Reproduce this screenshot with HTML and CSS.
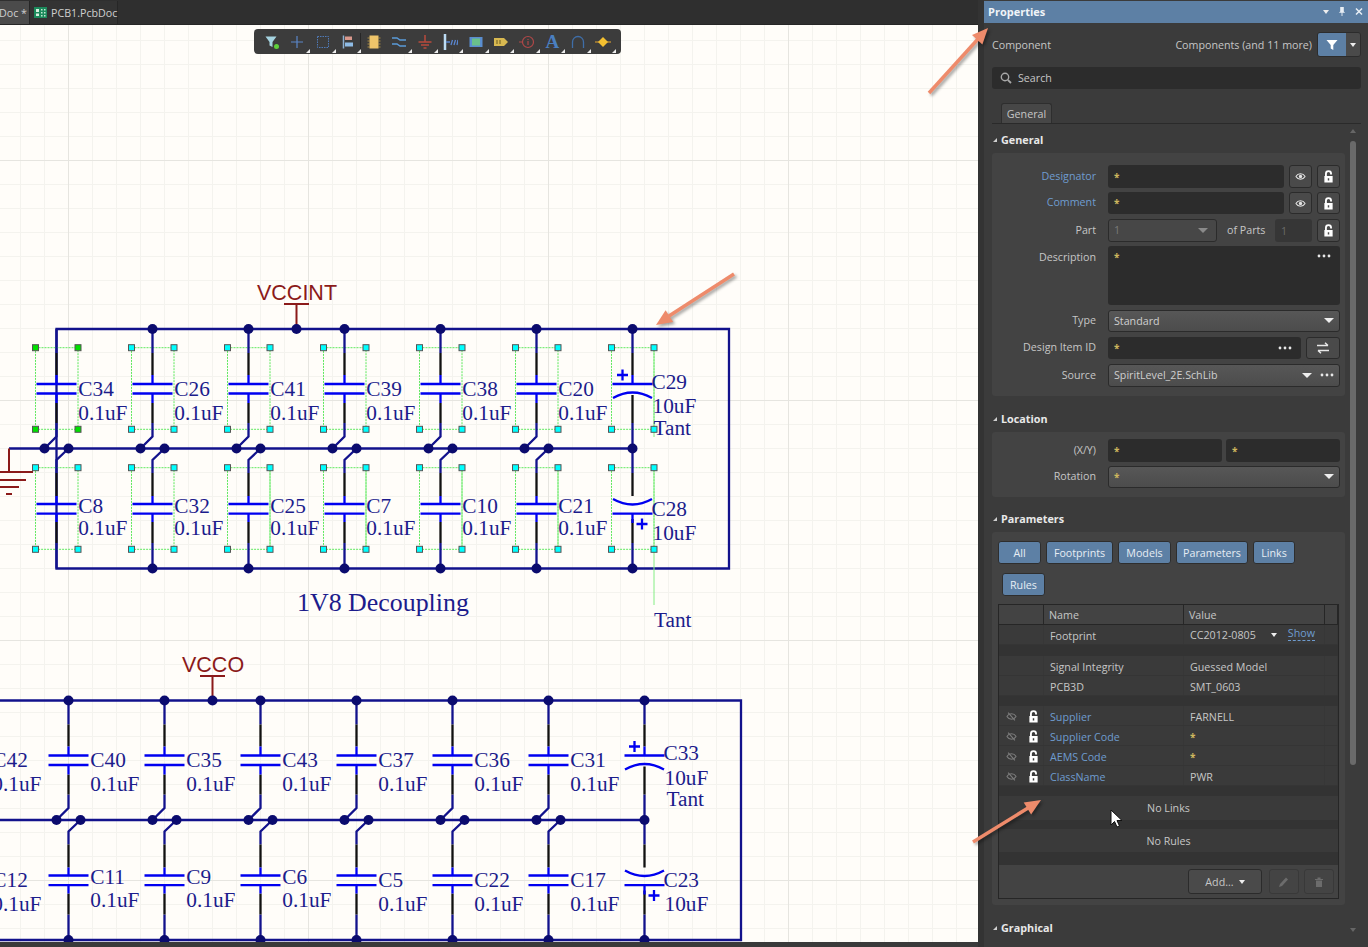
FILE: index.html
```html
<!DOCTYPE html>
<html lang="en">
<head>
  <meta charset="UTF-8" />
  <title>Properties - PCB1.PcbDoc</title>
  <link rel="stylesheet" href="styles.css">
</head>
<body>
  <svg class="icon-defs" aria-hidden="true">
    <defs>
      <symbol id="i-lock" viewBox="0 0 12 14">
        <path d="M3.200 7V4a2.800 2.800 0 0 1 5.600 0v.8" fill="none" stroke="#fff" stroke-width="2"/>
        <path d="M1.500 6.500h9v7h-9z M5.200 9v2.400h1.600V9z" fill="#fff" fill-rule="evenodd"/>
      </symbol>
      <symbol id="i-eye" viewBox="0 0 14 12">
        <path d="M.8 6C3.800 1.200 10.200 1.200 13.200 6 10.200 10.800 3.800 10.800.8 6z" fill="none" stroke="#e4e4e4" stroke-width="1.500"/>
        <circle cx="7" cy="6" r="2.200" fill="#e4e4e4"/>
      </symbol>
      <symbol id="i-eye-off" viewBox="0 0 14 12">
        <path d="M.8 6C3.800 1.200 10.200 1.200 13.200 6 10.200 10.800 3.800 10.800.8 6z" fill="none" stroke="#7c7c7c" stroke-width="1.500"/>
        <path d="M2.500.8l9 10.400" stroke="#7c7c7c" stroke-width="1.500"/>
      </symbol>
      <symbol id="i-dots" viewBox="0 0 14 4">
        <circle cx="2" cy="2" r="1.400" fill="#e8e8e8"/><circle cx="7" cy="2" r="1.400" fill="#e8e8e8"/><circle cx="12" cy="2" r="1.400" fill="#e8e8e8"/>
      </symbol>

      <!-- schematic parts, origin = top rail at the capacitor's column -->
      <g id="cap-top" fill="none" stroke-width="2.300">
        <path d="M0 0V24M0 94V107.500L-12 119.500" stroke="#12128c"/>
        <path d="M0 24V46M0 74V94" stroke="#111"/>
        <path d="M0 46V55M0 64.500V74M-20 55H20M-20 64.500H20" stroke="#0000f0"/>
      </g>
      <g id="cap-bot" fill="none" stroke-width="2.300">
        <path d="M12 119.500L0 131V144M0 214V239.500" stroke="#12128c"/>
        <path d="M0 144V167M0 193V214" stroke="#111"/>
        <path d="M0 167V175M0 184.700V193M-20 175H20M-20 184.700H20" stroke="#0000f0"/>
      </g>
      <g id="pol-top" fill="none" stroke-width="2.300">
        <path d="M0 0V24M0 94V119.500" stroke="#12128c"/>
        <path d="M0 24V46M0 66V94" stroke="#111"/>
        <path d="M0 46V55M-20 55H20M-19.500 69Q0 58 19.500 69M-15.500 46H-4.500M-10 40.500V51.500" stroke="#0000f0"/>
      </g>
      <g id="pol-bot" fill="none" stroke-width="2.300">
        <path d="M0 119.500V144M0 214V239.500" stroke="#12128c"/>
        <path d="M0 144V167M0 190V214" stroke="#111"/>
        <path d="M-19.500 170Q0 181 19.500 170M-20 184.700H20M0 184.700V194M4 195H15M9.500 189.500V200.500" stroke="#0000f0"/>
      </g>
      <g id="dots-mid" fill="#0b0b6e"><circle cx="-12" cy="119.500" r="5"/><circle cx="12" cy="119.500" r="5"/></g>
      <path id="sel-top" d="M-21 18.700H21.500V100.300H-21Z" fill="none" stroke="#5fe85f" stroke-dasharray="2 1"/>
      <path id="sel-bot" d="M-21 138.700H21.500V220.300H-21Z" fill="none" stroke="#5fe85f" stroke-dasharray="2 1"/>
      <g id="grips-top" stroke="#555"><rect x="-24" y="15.700" width="6" height="6"/><rect x="18.500" y="15.700" width="6" height="6"/><rect x="-24" y="97.300" width="6" height="6"/><rect x="18.500" y="97.300" width="6" height="6"/></g>
      <g id="grips-bot" stroke="#555"><rect x="-24" y="135.700" width="6" height="6"/><rect x="18.500" y="135.700" width="6" height="6"/><rect x="-24" y="217.300" width="6" height="6"/><rect x="18.500" y="217.300" width="6" height="6"/></g>
    </defs>
  </svg>

  <div class="app">
    <main class="editor">
      <nav class="doc-tabs">
        <div class="doc-tab doc-tab-active">Doc *</div>
        <div class="doc-tab">
          <svg class="pcb-icon" viewBox="0 0 13 11"><rect width="13" height="11" fill="#1c8a5c"/><path d="M2 2h3v3H2zM2 6.500h3v2.500H2z" fill="#d8f0e0"/><path d="M7 2h1.500v1.500H7zM10 2h1.500v1.500H10zM7 5h1.500v1.500H7zM10 5h1.500v1.500H10zM7 8h1.500v1.500H7zM10 8h1.500v1.500H10z" fill="#bfe8d0"/></svg>
          PCB1.PcbDoc
        </div>
      </nav>

      <div class="canvas">
        <svg class="schematic" viewBox="0 25 978 917" width="978" height="917">
          <!-- 1V8 block -->
          <path class="wire" d="M56.500 329H729V568.500H56.500ZM9 448.500H632.500"/>
          <path class="power" d="M296.500 304V329M284 304H309M9 448.500V472M0 472H33M0 480H26M0 487H19M6 494H12"/>
          <text class="net" x="257" y="300">VCCINT</text>
          <g class="sel">
            <use href="#sel-top" x="56.500" y="329"/><use href="#sel-top" x="152.500" y="329"/><use href="#sel-top" x="248.500" y="329"/><use href="#sel-top" x="344.500" y="329"/><use href="#sel-top" x="440.500" y="329"/><use href="#sel-top" x="536.500" y="329"/><use href="#sel-top" x="632.500" y="329"/>
            <use href="#sel-bot" x="56.500" y="329"/><use href="#sel-bot" x="152.500" y="329"/><use href="#sel-bot" x="248.500" y="329"/><use href="#sel-bot" x="344.500" y="329"/><use href="#sel-bot" x="440.500" y="329"/><use href="#sel-bot" x="536.500" y="329"/><use href="#sel-bot" x="632.500" y="329"/>
          </g>
          <path class="sel-line" d="M654 347V437M654 467V605M270 468V549M366 468V549M462 468V549M558 468V549"/>
          <use href="#cap-top" x="56.500" y="329"/><use href="#cap-top" x="152.500" y="329"/><use href="#cap-top" x="248.500" y="329"/><use href="#cap-top" x="344.500" y="329"/><use href="#cap-top" x="440.500" y="329"/><use href="#cap-top" x="536.500" y="329"/><use href="#pol-top" x="632.500" y="329"/>
          <use href="#cap-bot" x="56.500" y="329"/><use href="#cap-bot" x="152.500" y="329"/><use href="#cap-bot" x="248.500" y="329"/><use href="#cap-bot" x="344.500" y="329"/><use href="#cap-bot" x="440.500" y="329"/><use href="#cap-bot" x="536.500" y="329"/><use href="#pol-bot" x="632.500" y="329"/>
          <use href="#dots-mid" x="56.500" y="329"/><use href="#dots-mid" x="152.500" y="329"/><use href="#dots-mid" x="248.500" y="329"/><use href="#dots-mid" x="344.500" y="329"/><use href="#dots-mid" x="440.500" y="329"/><use href="#dots-mid" x="536.500" y="329"/>
          <g class="dots">
            <circle cx="152.500" cy="329" r="5"/><circle cx="248.500" cy="329" r="5"/><circle cx="296.500" cy="329" r="5"/><circle cx="344.500" cy="329" r="5"/><circle cx="440.500" cy="329" r="5"/><circle cx="536.500" cy="329" r="5"/><circle cx="632.500" cy="329" r="5"/>
            <circle cx="632.500" cy="448.500" r="5"/>
            <circle cx="152.500" cy="568.500" r="5"/><circle cx="248.500" cy="568.500" r="5"/><circle cx="344.500" cy="568.500" r="5"/><circle cx="440.500" cy="568.500" r="5"/><circle cx="536.500" cy="568.500" r="5"/><circle cx="632.500" cy="568.500" r="5"/>
          </g>
          <use class="grip-on" href="#grips-top" x="56.500" y="329"/><use class="grip" href="#grips-bot" x="56.500" y="329"/>
          <use class="grip" href="#grips-top" x="152.500" y="329"/><use class="grip" href="#grips-bot" x="152.500" y="329"/>
          <use class="grip" href="#grips-top" x="248.500" y="329"/><use class="grip" href="#grips-bot" x="248.500" y="329"/>
          <use class="grip" href="#grips-top" x="344.500" y="329"/><use class="grip" href="#grips-bot" x="344.500" y="329"/>
          <use class="grip" href="#grips-top" x="440.500" y="329"/><use class="grip" href="#grips-bot" x="440.500" y="329"/>
          <use class="grip" href="#grips-top" x="536.500" y="329"/><use class="grip" href="#grips-bot" x="536.500" y="329"/>
          <use class="grip" href="#grips-top" x="632.500" y="329"/><use class="grip" href="#grips-bot" x="632.500" y="329"/>
          <g class="label">
            <text x="78.300" y="396">C34</text><text x="78.300" y="420">0.1uF</text>
            <text x="174.300" y="396">C26</text><text x="174.300" y="420">0.1uF</text>
            <text x="270.300" y="396">C41</text><text x="270.300" y="420">0.1uF</text>
            <text x="366.300" y="396">C39</text><text x="366.300" y="420">0.1uF</text>
            <text x="462.300" y="396">C38</text><text x="462.300" y="420">0.1uF</text>
            <text x="558.300" y="396">C20</text><text x="558.300" y="420">0.1uF</text>
            <text x="651.500" y="389">C29</text><text x="652.500" y="413">10uF</text><text x="653.500" y="435">Tant</text>
            <text x="78.300" y="513">C8</text><text x="78.300" y="535">0.1uF</text>
            <text x="174.300" y="513">C32</text><text x="174.300" y="535">0.1uF</text>
            <text x="270.300" y="513">C25</text><text x="270.300" y="535">0.1uF</text>
            <text x="366.300" y="513">C7</text><text x="366.300" y="535">0.1uF</text>
            <text x="462.300" y="513">C10</text><text x="462.300" y="535">0.1uF</text>
            <text x="558.300" y="513">C21</text><text x="558.300" y="535">0.1uF</text>
            <text x="651.500" y="516">C28</text><text x="652.500" y="540">10uF</text>
            <text x="654" y="627">Tant</text>
          </g>
          <text class="title" x="297" y="611">1V8 Decoupling</text>

          <!-- VCCO block -->
          <path class="wire" d="M0 700.500H741V940H0M0 820H644.500"/>
          <path class="power" d="M212.500 676V700.500M200 676H225"/>
          <text class="net" x="182" y="672">VCCO</text>
          <use href="#cap-top" x="68.500" y="700.500"/><use href="#cap-top" x="164.500" y="700.500"/><use href="#cap-top" x="260.500" y="700.500"/><use href="#cap-top" x="356.500" y="700.500"/><use href="#cap-top" x="452.500" y="700.500"/><use href="#cap-top" x="548.500" y="700.500"/><use href="#pol-top" x="644.500" y="700.500"/>
          <use href="#cap-bot" x="68.500" y="700.500"/><use href="#cap-bot" x="164.500" y="700.500"/><use href="#cap-bot" x="260.500" y="700.500"/><use href="#cap-bot" x="356.500" y="700.500"/><use href="#cap-bot" x="452.500" y="700.500"/><use href="#cap-bot" x="548.500" y="700.500"/><use href="#pol-bot" x="644.500" y="700.500"/>
          <use href="#dots-mid" x="68.500" y="700.500"/><use href="#dots-mid" x="164.500" y="700.500"/><use href="#dots-mid" x="260.500" y="700.500"/><use href="#dots-mid" x="356.500" y="700.500"/><use href="#dots-mid" x="452.500" y="700.500"/><use href="#dots-mid" x="548.500" y="700.500"/>
          <g class="dots">
            <circle cx="68.500" cy="700.500" r="5"/><circle cx="164.500" cy="700.500" r="5"/><circle cx="212.500" cy="700.500" r="5"/><circle cx="260.500" cy="700.500" r="5"/><circle cx="356.500" cy="700.500" r="5"/><circle cx="452.500" cy="700.500" r="5"/><circle cx="548.500" cy="700.500" r="5"/><circle cx="644.500" cy="700.500" r="5"/>
            <circle cx="644.500" cy="820" r="5"/>
            <circle cx="68.500" cy="940" r="5"/><circle cx="164.500" cy="940" r="5"/><circle cx="260.500" cy="940" r="5"/><circle cx="356.500" cy="940" r="5"/><circle cx="452.500" cy="940" r="5"/><circle cx="548.500" cy="940" r="5"/><circle cx="644.500" cy="940" r="5"/>
          </g>
          <g class="label">
            <text x="-7.700" y="767">C42</text><text x="-7.700" y="791">0.1uF</text>
            <text x="90.300" y="767">C40</text><text x="90.300" y="791">0.1uF</text>
            <text x="186.300" y="767">C35</text><text x="186.300" y="791">0.1uF</text>
            <text x="282.300" y="767">C43</text><text x="282.300" y="791">0.1uF</text>
            <text x="378.300" y="767">C37</text><text x="378.300" y="791">0.1uF</text>
            <text x="474.300" y="767">C36</text><text x="474.300" y="791">0.1uF</text>
            <text x="570.300" y="767">C31</text><text x="570.300" y="791">0.1uF</text>
            <text x="663.500" y="760">C33</text><text x="664.500" y="785">10uF</text><text x="666.500" y="806">Tant</text>
            <text x="-7.700" y="887">C12</text><text x="-7.700" y="911">0.1uF</text>
            <text x="90.300" y="884">C11</text><text x="90.300" y="907">0.1uF</text>
            <text x="186.300" y="884">C9</text><text x="186.300" y="907">0.1uF</text>
            <text x="282.300" y="884">C6</text><text x="282.300" y="907">0.1uF</text>
            <text x="378.300" y="887">C5</text><text x="378.300" y="911">0.1uF</text>
            <text x="474.300" y="887">C22</text><text x="474.300" y="911">0.1uF</text>
            <text x="570.300" y="887">C17</text><text x="570.300" y="911">0.1uF</text>
            <text x="663.500" y="887">C23</text><text x="664.500" y="911">10uF</text>
          </g>
        </svg>

        <div class="toolbar">
          <div class="tool"><svg viewBox="0 0 16 16"><path d="M1.500 2.500h11L8.500 8v5l-3-1.500V8z" fill="#a5d3e0"/><circle cx="12.500" cy="12.500" r="2.500" fill="#5fd03a"/></svg></div>
          <div class="tool more"><svg viewBox="0 0 16 16"><path d="M8 2v12M2 8h12" stroke="#5a86c8" stroke-width="1.200"/></svg></div>
          <div class="tool more"><svg viewBox="0 0 16 16"><rect x="2.500" y="2.500" width="11" height="11" fill="none" stroke="#4f7ab8" stroke-dasharray="1.500 1"/></svg></div>
          <div class="tool more tool-last"><svg viewBox="0 0 16 16"><path d="M3.500 1.500v13" stroke="#8fb0d0" stroke-width="1.500"/><path d="M5 2.500h7v3.500H5z" fill="#d8988c"/><path d="M5 8.500h8v4H5z" fill="#8fbce6"/></svg></div>
          <div class="tool"><svg viewBox="0 0 16 16"><path d="M1.500 4h2M1.500 7h2M1.500 10h2M1.500 13h2M12.500 4h2M12.500 7h2M12.500 10h2M12.500 13h2" stroke="#a88a40"/><rect x="3.500" y="1.500" width="9" height="13" fill="#eec46a"/></svg></div>
          <div class="tool more"><svg viewBox="0 0 16 16"><path d="M1 4h5l3 2h6M1 10h5l3 2h6" fill="none" stroke="#5a9ad8" stroke-width="1.500"/></svg></div>
          <div class="tool more"><svg viewBox="0 0 16 16"><path d="M8 1v7M1.500 8h13M4 11h8M6.500 14h3" stroke="#b84a3c" stroke-width="1.500"/></svg></div>
          <div class="tool more"><svg viewBox="0 0 16 16"><path d="M3 0v16" stroke="#bcdcf4" stroke-width="2.500"/><path d="M4 8h4M9 11l1.500-5M12 11l1.500-5M15 11l1-5" stroke="#5a86d0" stroke-width="1.300"/></svg></div>
          <div class="tool more"><svg viewBox="0 0 16 16"><rect x="1.500" y="3" width="13" height="10" fill="#5a8ed0"/><rect x="4" y="4.500" width="8" height="7" fill="#6ac08a"/></svg></div>
          <div class="tool more"><svg viewBox="0 0 16 16"><path d="M1 4h10l4 4-4 4H1z" fill="#d8b850"/><path d="M4 6v4M7 6v4" stroke="#6a5a20"/></svg></div>
          <div class="tool more"><svg viewBox="0 0 16 16"><circle cx="9" cy="8" r="5.500" fill="none" stroke="#b04848" stroke-width="1.200"/><path d="M9 5v1M9 7v4M0 8h3.500" stroke="#b04848" stroke-width="1.200"/></svg></div>
          <div class="tool more tool-text">A</div>
          <div class="tool more"><svg viewBox="0 0 16 16"><path d="M2.500 14V8a5.500 5.500 0 0 1 11 0v6" fill="none" stroke="#3f6ea8" stroke-width="1.300"/></svg></div>
          <div class="tool more"><svg viewBox="0 0 16 16"><path d="M0 8h16" stroke="#e8a830"/><path d="M8 3l5 5-5 5-5-5z" fill="#f4c030"/></svg></div>
        </div>
      </div>
      <div class="status"></div>
    </main>

    <aside class="panel">
      <header class="panel-title">
        <span>Properties</span>
        <div class="win-ctrls">
          <i class="caret caret-sm"></i>
          <svg viewBox="0 0 8 10"><path d="M2 0h4v5l1.500 1.500h-7L2 5zM3.500 6.500h1V10h-1z" fill="#e8eef4"/></svg>
          <svg viewBox="0 0 8 8"><path d="M1 1l6 6M7 1L1 7" stroke="#e8eef4" stroke-width="1.500"/></svg>
        </div>
      </header>

      <div class="panel-top">
        <div class="kind-row">
          <span>Component</span>
          <span class="kind-right">Components (and 11 more)</span>
          <div class="filter-split">
            <button class="filter-btn"><svg viewBox="0 0 12 12"><path d="M.5 1h11L7.300 6v5l-2.600-1.500V6z" fill="#fff"/></svg></button>
            <button class="filter-drop"><i class="caret caret-sm"></i></button>
          </div>
        </div>
        <div class="search">
          <svg viewBox="0 0 12 12"><circle cx="5" cy="5" r="3.700" fill="none" stroke="#a8a8a8" stroke-width="1.400"/><path d="M7.800 7.800L11 11" stroke="#a8a8a8" stroke-width="1.800"/></svg>
          Search
        </div>
        <div class="tabs"><div class="tab">General</div></div>
      </div>

      <div class="panel-body">
        <div class="sections">
          <h3 class="sec-title">General</h3>
          <section class="card card-general">
            <div class="prop"><label class="link">Designator</label><div class="field">
              <div class="inp grow"><b class="star">*</b></div>
              <button class="sq"><svg class="eye" viewBox="0 0 14 12"><use href="#i-eye"/></svg></button>
              <button class="sq"><svg class="lock" viewBox="0 0 12 14"><use href="#i-lock"/></svg></button>
            </div></div>
            <div class="prop prop-up"><label class="link">Comment</label><div class="field">
              <div class="inp grow"><b class="star">*</b></div>
              <button class="sq"><svg class="eye" viewBox="0 0 14 12"><use href="#i-eye"/></svg></button>
              <button class="sq"><svg class="lock" viewBox="0 0 12 14"><use href="#i-lock"/></svg></button>
            </div></div>
            <div class="prop"><label>Part</label><div class="field">
              <div class="sel-box part-sel">1<i class="caret caret-dim"></i></div>
              <span class="of-parts">of Parts</span>
              <div class="inp parts-num">1</div>
              <button class="sq"><svg class="lock" viewBox="0 0 12 14"><use href="#i-lock"/></svg></button>
            </div></div>
            <div class="prop prop-tall"><label>Description</label><div class="field">
              <div class="inp grow area"><b class="star">*</b><svg class="dots-ic" viewBox="0 0 14 4"><use href="#i-dots"/></svg></div>
            </div></div>
            <div class="prop prop-up"><label>Type</label><div class="field">
              <div class="sel-box grow">Standard<i class="caret"></i></div>
            </div></div>
            <div class="prop prop-up"><label>Design Item ID</label><div class="field">
              <div class="inp grow"><b class="star">*</b><svg class="dots-ic" viewBox="0 0 14 4"><use href="#i-dots"/></svg></div>
              <button class="sq swap"><svg viewBox="0 0 14 12"><path d="M1 3.500h11M9 .8l3 2.700M13 8.500H2M5 11.200L2 8.500" fill="none" stroke="#e8e8e8" stroke-width="1.500"/></svg></button>
            </div></div>
            <div class="prop"><label>Source</label><div class="field">
              <div class="sel-box grow">SpiritLevel_2E.SchLib<i class="caret caret-src"></i><svg class="dots-ic" viewBox="0 0 14 4"><use href="#i-dots"/></svg></div>
            </div></div>
          </section>

          <h3 class="sec-title">Location</h3>
          <section class="card card-location">
            <div class="prop prop-xy"><label>(X/Y)</label><div class="field">
              <div class="inp grow"><b class="star">*</b></div>
              <div class="inp grow"><b class="star">*</b></div>
            </div></div>
            <div class="prop prop-up"><label>Rotation</label><div class="field">
              <div class="sel-box grow"><b class="star">*</b><i class="caret"></i></div>
            </div></div>
          </section>

          <h3 class="sec-title sec-params">Parameters</h3>
          <section class="card card-params">
            <div class="chips">
              <button class="chip">All</button>
              <button class="chip">Footprints</button>
              <button class="chip">Models</button>
              <button class="chip">Parameters</button>
              <button class="chip">Links</button>
            </div>
            <div class="chips chips-2"><button class="chip">Rules</button></div>

            <div class="ptable">
              <div class="row head"><span></span><span>Name</span><span>Value</span><span></span></div>
              <div class="row"><span></span><span>Footprint</span><span class="fp-val">CC2012-0805<i class="caret caret-sm"></i><a class="show">Show</a></span><span></span></div>
              <div class="gap gap-11"></div>
              <div class="row"><span></span><span>Signal Integrity</span><span>Guessed Model</span><span></span></div>
              <div class="row"><span></span><span>PCB3D</span><span>SMT_0603</span><span></span></div>
              <div class="gap gap-10"></div>
              <div class="row"><span class="vis"><svg class="eye" viewBox="0 0 14 12"><use href="#i-eye-off"/></svg><svg class="lock" viewBox="0 0 12 14"><use href="#i-lock"/></svg></span><span class="link">Supplier</span><span>FARNELL</span><span></span></div>
              <div class="row"><span class="vis"><svg class="eye" viewBox="0 0 14 12"><use href="#i-eye-off"/></svg><svg class="lock" viewBox="0 0 12 14"><use href="#i-lock"/></svg></span><span class="link">Supplier Code</span><span><b class="star">*</b></span><span></span></div>
              <div class="row"><span class="vis"><svg class="eye" viewBox="0 0 14 12"><use href="#i-eye-off"/></svg><svg class="lock" viewBox="0 0 12 14"><use href="#i-lock"/></svg></span><span class="link">AEMS Code</span><span><b class="star">*</b></span><span></span></div>
              <div class="row"><span class="vis"><svg class="eye" viewBox="0 0 14 12"><use href="#i-eye-off"/></svg><svg class="lock" viewBox="0 0 12 14"><use href="#i-lock"/></svg></span><span class="link">ClassName</span><span>PWR</span><span></span></div>
              <div class="gap gap-10"></div>
              <div class="empty empty-links">No Links</div>
              <div class="gap gap-9"></div>
              <div class="empty empty-rules">No Rules</div>
              <div class="gap gap-13"></div>
              <div class="tfoot">
                <button class="add">Add...<i class="caret caret-sm"></i></button>
                <button class="ghost"><svg viewBox="0 0 12 12"><path d="M1 11l1-3 6-6.500 2 2L4 10z" fill="#6c6c6c"/></svg></button>
                <button class="ghost"><svg viewBox="0 0 12 12"><path d="M2 3h8v1H2zM4.500 1.500h3V3h-3zM3 4.500h6V11H3z" fill="#6c6c6c"/></svg></button>
              </div>
            </div>
          </section>

          <h3 class="sec-title">Graphical</h3>
        </div>
        <div class="scroll">
          <i class="scroll-up"></i>
          <div class="scroll-thumb"></div>
          <i class="scroll-down"></i>
        </div>
      </div>
    </aside>
  </div>

  <!-- callout arrows and mouse pointer drawn on top of the screenshot -->
  <svg class="overlay" viewBox="0 0 1368 947" width="1368" height="947">
    <g class="arrow">
      <path d="M929 93L978 39"/><polygon points="988,28 982.400,44.500 972,35.100"/>
      <path d="M734 274L669 316"/><polygon points="656,325 673.200,322.100 665.600,310.300"/>
      <path d="M973 842L1028 808"/><polygon points="1041,800 1031.100,814.400 1023.700,802.400"/>
    </g>
    <path class="pointer" d="M1111 810V825L1114.500 821.500L1117 827L1119.500 826L1117 820.500H1122Z"/>
  </svg>
</body>
</html>
```

FILE: styles.css
```css
* {
  margin: 0;
  padding: 0;
  box-sizing: border-box;
}
body {
  width: 1368px;
  height: 947px;
  overflow: hidden;
  background: #333;
  color: #c6c6c6;
  font-family: 'Open Sans', sans-serif;
  font-size: 10.700px;
  position: relative;
}
button {
  font: inherit;
  color: inherit;
}
.icon-defs {
  position: absolute;
  width: 0;
  height: 0;
}
.app {
  display: grid;
  grid-template-columns: 984px 384px;
  height: 947px;
}

/* editor side */
.editor {
  width: 978px;
  display: flex;
  flex-direction: column;
}
.doc-tabs {
  height: 25px;
  display: flex;
  background: #2f2f2f;
  border-bottom: 1px solid #262626;
  padding-top: 1px;
}
.doc-tab {
  display: flex;
  align-items: center;
  gap: 4px;
  padding: 0 3px 0 4px;
  width: 88px;
  background: #333;
  border-right: 1px solid #262626;
  color: #cfcfcf;
  white-space: nowrap;
}
.doc-tab-active {
  width: 30px;
  background: #4b4b4b;
  padding: 0;
  justify-content: flex-end;
  padding-right: 2px;
  overflow: hidden;
}
.pcb-icon {
  width: 13px;
  height: 11px;
  flex: none;
}
.canvas {
  position: relative;
  height: 917px;
  overflow: hidden;
  background-color: #fffdf9;
  background-image:
    linear-gradient(to right, #e6e5e0 1px, transparent 1px),
    linear-gradient(to bottom, #e6e5e0 1px, transparent 1px),
    linear-gradient(to right, #f4f3ee 1px, transparent 1px),
    linear-gradient(to bottom, #f4f3ee 1px, transparent 1px);
  background-size: 240px 240px, 240px 240px, 24px 24px, 24px 24px;
  background-position: 68px 135px, 68px 135px, 20px 15px, 20px 15px;
}
.schematic {
  display: block;
}
.wire {
  fill: none;
  stroke: #12128c;
  stroke-width: 2.300;
}
.power {
  fill: none;
  stroke: #8b1a1a;
  stroke-width: 2;
}
.dots {
  fill: #0b0b6e;
}
.sel-line {
  fill: none;
  stroke: #84ee84;
  stroke-width: 1;
}
.grip {
  fill: #00ffff;
}
.grip-on {
  fill: #00e000;
}
.net {
  font-family: 'Liberation Sans', sans-serif;
  font-size: 21.500px;
  fill: #8b1a1a;
}
.label text {
  font-family: 'Liberation Serif', serif;
  font-size: 21.300px;
  fill: #1c1c8c;
}
.title {
  font-family: 'Liberation Serif', serif;
  font-size: 25.900px;
  fill: #1c1c8c;
}
.status {
  height: 5px;
  background: #3a3a3a;
}

.toolbar {
  position: absolute;
  top: 4px;
  left: 254px;
  width: 367px;
  height: 25px;
  padding-left: 5px;
  display: flex;
  align-items: center;
  background: #3c3c3c;
  border-radius: 4px;
}
.tool {
  position: relative;
  width: 25.500px;
  height: 25px;
  display: flex;
  align-items: center;
  justify-content: center;
}
.tool svg {
  width: 16px;
  height: 16px;
}
.tool-last::before {
  content: "";
  position: absolute;
  right: 0;
  top: 4px;
  bottom: 4px;
  border-right: 1px solid #262626;
}
.more::after {
  content: "";
  position: absolute;
  right: 0;
  bottom: 1px;
  border-left: 4px solid transparent;
  border-bottom: 4px solid #eee;
}
.tool-text {
  font-family: 'Liberation Serif', serif;
  font-size: 19px;
  font-weight: bold;
  color: #4a7fc0;
}

/* properties panel */
.panel {
  background: #3b3b3b;
  height: 947px;
  overflow: hidden;
  padding-top: 1px;
}
.panel-title {
  height: 22px;
  background: #5d80a5;
  color: #f0f4f8;
  font-size: 11px;
  font-weight: 700;
  padding: 0 5px 1px 4px;
  display: flex;
  align-items: center;
  justify-content: space-between;
}
.win-ctrls {
  display: flex;
  align-items: center;
  gap: 9px;
}
.win-ctrls svg {
  width: 8px;
  height: 9px;
}
.panel-top {
  padding: 9px 7px 0 8px;
}
.kind-row {
  height: 25px;
  display: flex;
  align-items: center;
}
.kind-right {
  margin-left: auto;
  margin-right: 5px;
}
.filter-split {
  display: flex;
  height: 25px;
  border: 1px solid #2c2c2c;
  border-radius: 3px;
  overflow: hidden;
}
.filter-btn {
  width: 28px;
  background: #5d80a5;
  border: none;
  display: flex;
  align-items: center;
  justify-content: center;
}
.filter-btn svg {
  width: 12px;
  height: 12px;
}
.filter-drop {
  width: 14px;
  background: #4a4a4a;
  border: none;
  display: flex;
  align-items: center;
  justify-content: center;
}
.search {
  height: 22px;
  margin-top: 10px;
  background: #2c2c2c;
  border-radius: 3px;
  display: flex;
  align-items: center;
  gap: 6px;
  padding: 0 0 1px 8px;
}
.search svg {
  width: 12px;
  height: 12px;
}
.tabs {
  margin-top: 14px;
  padding-left: 9px;
  height: 21px;
  border-bottom: 1px solid #2a2a2a;
}
.tab {
  width: 51px;
  height: 20px;
  background: #474747;
  border: 1px solid #2e2e2e;
  border-bottom: none;
  border-radius: 3px 3px 0 0;
  display: flex;
  align-items: center;
  justify-content: center;
}

.panel-body {
  display: flex;
  height: 823px;
  padding-left: 8px;
}
.sections {
  width: 353px;
  padding-top: 8px;
}
.sec-title {
  height: 17px;
  margin-top: 15px;
  margin-bottom: 4px;
  padding-left: 9px;
  font-size: 10.800px;
  font-weight: 700;
  color: #e8e8e8;
  line-height: 15px;
  position: relative;
}
.sec-title:first-child {
  margin-top: 0;
}
.sec-params {
  margin-top: 14px;
}
.sec-title::before {
  content: "";
  position: absolute;
  left: 1px;
  top: 6px;
  border-left: 4px solid transparent;
  border-bottom: 4px solid #d0d0d0;
}
.card {
  background: #434343;
  border-radius: 3px;
}
.card-general {
  height: 243px;
  padding: 12px 5px 0 0;
  display: flex;
  flex-direction: column;
  gap: 5px;
}
.card-location {
  height: 65px;
  padding: 7px 5px 0 0;
  display: flex;
  flex-direction: column;
  gap: 4px;
}
.card-params {
  height: 373px;
  padding: 9px 6px 0;
}
.prop {
  display: grid;
  grid-template-columns: 104px 232px;
  column-gap: 12px;
  height: 22px;
}
.prop-tall {
  height: 59px;
}
.prop-xy {
  height: 23px;
}
.prop label {
  text-align: right;
  line-height: 23px;
  white-space: nowrap;
}
.prop-up label {
  line-height: 21px;
}
.link {
  color: #6f9ccf;
}
.field {
  display: flex;
  gap: 5px;
  align-items: stretch;
}
.prop-xy .field {
  gap: 4px;
}
.grow {
  flex: 1;
}
.inp {
  background: #2c2c2c;
  border-radius: 3px;
  display: flex;
  align-items: center;
  justify-content: space-between;
  padding: 0 9px 0 6px;
  position: relative;
}
.area {
  align-items: flex-start;
  padding-top: 4px;
}
.area .dots-ic {
  margin-top: 4px;
}
.star {
  color: #cdb75e;
  font-size: 10px;
  font-weight: 700;
}
.dots-ic {
  width: 14px;
  height: 4px;
  flex: none;
}
.parts-num {
  width: 37px;
  flex: none;
  color: #6a6a6a;
  background: #363636;
  padding-left: 6px;
}
.of-parts {
  width: 43px;
  margin-left: 5px;
  line-height: 22px;
  white-space: nowrap;
}
.sel-box {
  background: linear-gradient(#575757, #4c4c4c);
  border: 1px solid #2b2b2b;
  border-radius: 3px;
  display: flex;
  align-items: center;
  justify-content: space-between;
  padding: 0 5px 1px;
  color: #cfcfcf;
}
.sel-box.part-sel {
  width: 109px;
  flex: none;
  background: #474747;
  color: #7a7a7a;
}
.caret {
  display: inline-block;
  width: 0;
  height: 0;
  flex: none;
  border-left: 5px solid transparent;
  border-right: 5px solid transparent;
  border-top: 5px solid #eee;
}
.caret-sm {
  border-left-width: 3.500px;
  border-right-width: 3.500px;
  border-top-width: 4px;
}
.caret-dim {
  border-top-color: #8a8a8a;
  margin-right: 3px;
}
.caret-src {
  margin-left: auto;
  margin-right: 8px;
}
.sq {
  width: 23px;
  flex: none;
  background: #4a4a4a;
  border: 1px solid #2b2b2b;
  border-radius: 3px;
  display: flex;
  align-items: center;
  justify-content: center;
}
.eye {
  width: 11px;
  height: 9px;
}
.lock {
  width: 11px;
  height: 13px;
}
.swap {
  width: 34px;
}
.swap svg {
  width: 14px;
  height: 12px;
}

.chips {
  display: flex;
  gap: 5px;
}
.chips-2 {
  margin-top: 9px;
  padding-left: 4px;
}
.chip {
  width: 43px;
  height: 23px;
  background: #5d80a5;
  border: 1px solid #2e2e2e;
  border-radius: 3px;
  color: #e6edf4;
}
.chip:nth-child(2) { width: 67px; }
.chip:nth-child(3) { width: 53px; }
.chip:nth-child(4) { width: 72px; }
.chip:nth-child(5) { width: 42px; }
.ptable {
  margin-top: 8px;
  width: 341px;
  height: 295px;
  border: 1px solid #262626;
  background: #333;
}
.row {
  display: grid;
  grid-template-columns: 45px 140px 141px 1fr;
  height: 20px;
  background: #3a3a3a;
  border-bottom: 1px solid #353535;
}
.row > span {
  padding-left: 6px;
  line-height: 22px;
  border-right: 1px solid #373737;
  white-space: nowrap;
  overflow: hidden;
}
.head {
  background: #434343;
  border-bottom: 1px solid #262626;
}
.head > span {
  padding-left: 5px;
  line-height: 20px;
  border-right: 1px solid #262626;
}
.fp-val {
  display: flex;
  align-items: center;
  padding-top: 1px;
}
.fp-val .caret {
  margin: 0 11px 0 15px;
}
.show {
  color: #6f9ccf;
  border-bottom: 1px dashed #6f9ccf;
  line-height: 13px;
  margin-top: -3px;
}
.vis {
  display: flex;
  align-items: center;
  gap: 11px;
  padding-left: 7px !important;
  padding-top: 1px;
}
.gap-9 { height: 9px; }
.gap-10 { height: 10px; }
.gap-11 { height: 11px; }
.gap-13 { height: 13px; }
.empty {
  background: #3a3a3a;
  display: flex;
  align-items: center;
  justify-content: center;
}
.empty-links {
  height: 24px;
  padding-bottom: 1px;
}
.empty-rules { height: 23px; }
.tfoot {
  height: 33px;
  background: #434343;
  display: flex;
  align-items: center;
  justify-content: flex-end;
  gap: 5px;
  padding-right: 4px;
}
.add {
  width: 74px;
  height: 25px;
  margin-right: 2px;
  background: #4a4a4a;
  border: 1px solid #2b2b2b;
  border-radius: 3px;
  display: flex;
  align-items: center;
  justify-content: center;
  gap: 5px;
}
.ghost {
  width: 30px;
  height: 25px;
  background: #444;
  border: 1px solid #393939;
  border-radius: 3px;
  display: flex;
  align-items: center;
  justify-content: center;
}
.ghost svg {
  width: 12px;
  height: 12px;
}

.scroll {
  width: 7px;
  margin-left: 4px;
  display: flex;
  flex-direction: column;
  align-items: center;
}
.scroll-up {
  margin-top: 5px;
  border-left: 3.500px solid transparent;
  border-right: 3.500px solid transparent;
  border-bottom: 4px solid #666;
}
.scroll-thumb {
  width: 6px;
  height: 624px;
  margin-top: 8px;
  background: #6a6a6a;
  border-radius: 3px;
}
.scroll-down {
  margin-top: 163px;
  border-left: 3.500px solid transparent;
  border-right: 3.500px solid transparent;
  border-top: 4px solid #666;
}

.overlay {
  position: absolute;
  top: 0;
  left: 0;
  pointer-events: none;
}
.arrow {
  fill: #ee8b6b;
  stroke: none;
  filter: drop-shadow(2px 2px 1.500px rgba(0, 0, 0, 0.35));
}
.arrow path {
  fill: none;
  stroke: #ee8b6b;
  stroke-width: 3.500;
}
.pointer {
  fill: #fff;
  stroke: #111;
  stroke-width: 1;
}
```
